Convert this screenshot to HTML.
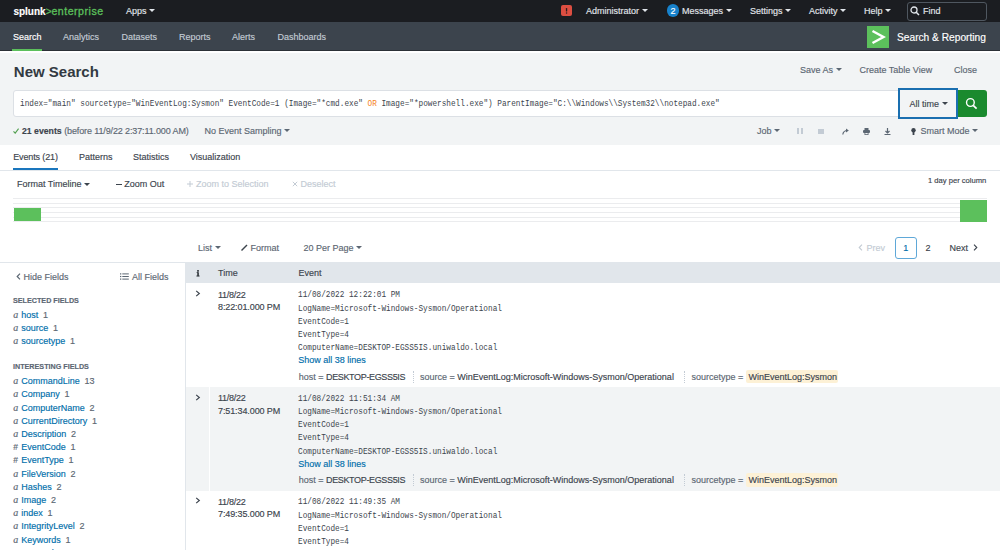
<!DOCTYPE html>
<html><head><meta charset="utf-8">
<style>
*{margin:0;padding:0;box-sizing:border-box}
html,body{width:1000px;height:550px;overflow:hidden;background:#fff}
body{font-family:"Liberation Sans",sans-serif;font-size:9px;color:#3c444d;position:relative;-webkit-text-stroke:0.15px currentColor}
.a{position:absolute}
.t{position:absolute;white-space:nowrap;line-height:10px}
.car{display:inline-block;width:0;height:0;border-left:3px solid transparent;border-right:3px solid transparent;border-top:3.5px solid currentColor;vertical-align:middle;margin-left:2.5px;position:relative;top:-0.8px}
.mono{font-family:"Liberation Mono",monospace;font-size:9px;line-height:10px;white-space:pre;transform:scaleX(0.858);transform-origin:0 0;-webkit-text-stroke:0}
.lnk{color:#006eaa}
.ty{font-family:"Liberation Serif",serif;font-style:italic;color:#5c6773;font-size:10px}
.k{color:#5c6773}
.v{color:#3c444d}
.dsep{width:0;height:12px;border-left:1px dotted #c3cbd4}
.gl{height:1px;background:#ebecee;left:13px;width:974px}
</style></head><body>

<!-- top bar -->
<div class="a" style="left:0;top:0;width:1000px;height:22px;background:#1b1d21"></div>
<!-- app bar -->
<div class="a" style="left:0;top:22px;width:1000px;height:29px;background:#3c444d;border-bottom:1px solid #2b3036"></div>
<div class="a" style="left:0;top:51px;width:1000px;height:1.5px;background:#fff"></div>
<!-- gray page header -->
<div class="a" style="left:0;top:52.5px;width:1000px;height:92.5px;background:#f2f4f5"></div>

<!-- logo -->
<div class="t" style="left:13.4px;top:5.8px;font-size:10px;font-weight:bold;color:#fff">splunk<span style="color:#5cc05c;font-weight:normal">&gt;<span style="font-size:10.6px;letter-spacing:0.5px;-webkit-text-stroke:0.3px #5cc05c">enterprise</span></span></div>
<div class="t" style="left:126px;top:6px;color:#e1e6eb">Apps<span class="car"></span></div>

<!-- right top -->
<div class="a" style="left:561px;top:5px;width:11px;height:11px;background:#dc4e41;border-radius:2px"></div>
<svg class="a" style="left:561px;top:5px" width="11" height="11" viewBox="0 0 11 11"><rect x="4.9" y="3" width="1.3" height="3.6" rx="0.5" fill="#2a1c1c"/><circle cx="5.55" cy="7.9" r="0.75" fill="#2a1c1c"/></svg>
<div class="t" style="left:586px;top:6px;color:#e1e6eb">Administrator<span class="car"></span></div>
<div class="a" style="left:666.7px;top:4px;width:12.6px;height:12.6px;background:#1782cc;border-radius:50%"></div>
<div class="t" style="left:666.7px;top:5.5px;width:12.6px;text-align:center;color:#fff;font-size:9px">2</div>
<div class="t" style="left:682px;top:6px;color:#e1e6eb">Messages<span class="car"></span></div>
<div class="t" style="left:750px;top:6px;color:#e1e6eb">Settings<span class="car"></span></div>
<div class="t" style="left:809px;top:6px;color:#e1e6eb">Activity<span class="car"></span></div>
<div class="t" style="left:864px;top:6px;color:#e1e6eb">Help<span class="car"></span></div>
<div class="a" style="left:907px;top:2px;width:80px;height:18.5px;border:1px solid #4f5760;border-radius:3px"></div>
<svg class="a" style="left:910px;top:6px" width="10" height="10" viewBox="0 0 10 10"><circle cx="4" cy="4" r="3" fill="none" stroke="#e1e6eb" stroke-width="1.3"/><path d="M6.2 6.2L9 9" stroke="#e1e6eb" stroke-width="1.5"/></svg>
<div class="t" style="left:923px;top:6px;color:#e1e6eb">Find</div>

<!-- nav -->
<div class="t" style="left:13px;top:32px;color:#fff">Search</div>
<div class="a" style="left:12.3px;top:49px;width:30px;height:2.4px;background:#5cc05c"></div>
<div class="t" style="left:63px;top:32px;color:#c3cbd4">Analytics</div>
<div class="t" style="left:121.5px;top:32px;color:#c3cbd4">Datasets</div>
<div class="t" style="left:179px;top:32px;color:#c3cbd4">Reports</div>
<div class="t" style="left:232px;top:32px;color:#c3cbd4">Alerts</div>
<div class="t" style="left:277.5px;top:32px;color:#c3cbd4">Dashboards</div>
<div class="a" style="left:867px;top:26px;width:22px;height:21.5px;background:#5cc05c"></div>
<svg class="a" style="left:867px;top:26px" width="22" height="22" viewBox="0 0 22 22"><path d="M5.5 5 L16.5 11 L5.5 17" fill="none" stroke="#fff" stroke-width="2.4"/></svg>
<div class="t" style="left:897px;top:32px;color:#fff;font-size:10.2px;margin-top:0.7px">Search &amp; Reporting</div>

<!-- title -->
<div class="t" style="left:13.8px;top:64.2px;font-size:15px;line-height:16px;font-weight:bold;color:#333a42;-webkit-text-stroke:0">New Search</div>
<div class="t" style="left:800px;top:65px;color:#5c6773">Save As<span class="car"></span></div>
<div class="t" style="left:859.5px;top:65px;color:#5c6773">Create Table View</div>
<div class="t" style="left:954px;top:65px;color:#5c6773">Close</div>

<!-- search bar -->
<div class="a" style="left:13px;top:90px;width:890px;height:26.8px;background:#fff;border:1px solid #dce0e5;border-radius:3px 0 0 3px"></div>
<div class="t mono" style="left:19.5px;top:98.5px;color:#3c444d">index="main" sourcetype="WinEventLog:Sysmon" EventCode=1 (Image="*cmd.exe" <span style="color:#f58220">OR</span> Image="*powershell.exe") ParentImage="C:\\Windows\\System32\\notepad.exe"</div>
<div class="a" style="left:898px;top:88.4px;width:60px;height:30.6px;background:#f2f4f5;border:2px solid #1a6fb0"></div>
<div class="t" style="left:909.5px;top:98.5px;color:#3c444d">All time<span class="car"></span></div>
<div class="a" style="left:958px;top:90.3px;width:29px;height:26.5px;background:#1a8a2e;border-radius:0 3px 3px 0"></div>
<svg class="a" style="left:964px;top:96px" width="15" height="15" viewBox="0 0 15 15"><circle cx="6.4" cy="6.5" r="3.85" fill="none" stroke="#fff" stroke-width="1.4"/><path d="M9.2 9.3L12.6 12.6" stroke="#fff" stroke-width="1.7"/></svg>

<!-- status row -->
<svg class="a" style="left:13px;top:128px" width="6" height="6" viewBox="0 0 6 6"><path d="M0.5 3.3L2.2 5.2L5.6 0.6" fill="none" stroke="#53a051" stroke-width="1.1"/></svg>
<div class="t" style="left:22px;top:125.8px;color:#3c444d"><b style="font-size:8.7px">21 events</b> <span style="color:#5c6773;letter-spacing:-0.12px">(before 11/9/22 2:37:11.000 AM)</span></div>
<div class="t" style="left:204.5px;top:125.8px;color:#5c6773">No Event Sampling<span class="car"></span></div>

<div class="t" style="left:757px;top:125.8px;color:#5c6773">Job<span class="car"></span></div>
<div class="a" style="left:797.3px;top:128.4px;width:1.8px;height:5.8px;background:#c3cbd4"></div>
<div class="a" style="left:800.9px;top:128.4px;width:1.8px;height:5.8px;background:#c3cbd4"></div>
<div class="a" style="left:818px;top:129px;width:6px;height:5px;background:#c3cbd4"></div>
<svg class="a" style="left:842px;top:128px" width="7" height="7" viewBox="0 0 7 7"><path d="M0.8 6.5 C1.2 3.5 3 2.5 5.5 2.5" fill="none" stroke="#5c6773" stroke-width="1.2"/><path d="M4 0.5 L6.8 2.5 L4 4.5Z" fill="#5c6773"/></svg>
<svg class="a" style="left:863px;top:128px" width="7" height="7" viewBox="0 0 7 7"><rect x="1.5" y="0" width="4" height="2" fill="#5c6773"/><rect x="0" y="2" width="7" height="3" rx="1" fill="#5c6773"/><rect x="1.5" y="4.5" width="4" height="2.5" fill="#5c6773"/><rect x="2.3" y="5" width="2.4" height="1.2" fill="#f2f4f5"/></svg>
<svg class="a" style="left:884px;top:128px" width="7" height="7" viewBox="0 0 7 7"><path d="M3.5 0V4.5" stroke="#5c6773" stroke-width="1.2"/><path d="M1.5 3L3.5 5L5.5 3" fill="none" stroke="#5c6773" stroke-width="1.2"/><path d="M0.5 6.5H6.5" stroke="#5c6773" stroke-width="1"/></svg>
<svg class="a" style="left:910.5px;top:127.5px" width="5" height="7" viewBox="0 0 5 7"><circle cx="2.5" cy="2.2" r="2.2" fill="#3c444d"/><rect x="1.6" y="3.5" width="1.8" height="3.5" fill="#3c444d"/></svg>
<div class="t" style="left:920.5px;top:125.8px;color:#5c6773">Smart Mode<span class="car"></span></div>

<!-- tabs -->
<div class="t" style="left:13.2px;top:152.3px;color:#3c444d;letter-spacing:-0.12px">Events (21)</div>
<div class="a" style="left:12.6px;top:167.6px;width:45.4px;height:2.1px;background:#1a76bd"></div>
<div class="t" style="left:79px;top:152.3px;color:#3c444d">Patterns</div>
<div class="t" style="left:133px;top:152.3px;color:#3c444d">Statistics</div>
<div class="t" style="left:190px;top:152.3px;color:#3c444d">Visualization</div>
<div class="a" style="left:0;top:169.5px;width:1000px;height:1px;background:#e1e6eb"></div>

<!-- timeline toolbar -->
<div class="t" style="left:17px;top:179.4px;color:#3c444d">Format Timeline<span class="car"></span></div>
<div class="a" style="left:115.7px;top:184px;width:6px;height:1.2px;background:#3c444d"></div>
<div class="t" style="left:124.3px;top:179.4px;color:#3c444d">Zoom Out</div>
<svg class="a" style="left:187px;top:181px" width="6" height="6" viewBox="0 0 6 6"><path d="M3 0V6M0 3H6" stroke="#c3cbd4" stroke-width="1"/></svg>
<div class="t" style="left:196px;top:179.4px;color:#c3cbd4">Zoom to Selection</div>
<svg class="a" style="left:292px;top:181.3px" width="6" height="6" viewBox="0 0 6 6"><path d="M0.8 0.8L5.2 5.2M5.2 0.8L0.8 5.2" stroke="#c3cbd4" stroke-width="1"/></svg>
<div class="t" style="left:300.4px;top:179.4px;color:#c3cbd4">Deselect</div>
<div class="t" style="left:928px;top:176px;font-size:7.6px;color:#3c444d">1 day per column</div>

<!-- timeline -->
<div class="a gl" style="top:198px"></div>
<div class="a gl" style="top:202.7px"></div>
<div class="a gl" style="top:207.3px"></div>
<div class="a gl" style="top:212px"></div>
<div class="a gl" style="top:216.6px"></div>
<div class="a gl" style="top:221.3px"></div>
<div class="a" style="left:14px;top:208px;width:27px;height:13px;background:#5cc05c"></div>
<div class="a" style="left:959.5px;top:199.5px;width:27px;height:22px;background:#5cc05c"></div>

<!-- list toolbar -->
<div class="t" style="left:198px;top:243px;color:#5c6773">List<span class="car"></span></div>
<svg class="a" style="left:241px;top:244px" width="7" height="7" viewBox="0 0 7 7"><path d="M0.5 6.5L6 1" stroke="#3c444d" stroke-width="1.4"/></svg>
<div class="t" style="left:250.5px;top:243px;color:#5c6773">Format</div>
<div class="t" style="left:303.5px;top:243px;color:#5c6773">20 Per Page<span class="car"></span></div>

<svg class="a" style="left:857.5px;top:244.3px" width="5" height="7" viewBox="0 0 5 7"><path d="M4 0.6L1.2 3.5L4 6.4" fill="none" stroke="#c3cbd4" stroke-width="1.1"/></svg>
<div class="t" style="left:866.4px;top:243px;color:#c3cbd4">Prev</div>
<div class="a" style="left:895px;top:237px;width:21.5px;height:21.5px;border:1px solid #5fa8d8;border-radius:3px"></div>
<div class="t" style="left:895px;top:243px;width:21.5px;text-align:center;color:#006eaa">1</div>
<div class="t" style="left:925.5px;top:243px;color:#3c444d">2</div>
<div class="t" style="left:949.5px;top:243px;color:#3c444d">Next</div>
<svg class="a" style="left:972.5px;top:244.3px" width="5" height="7" viewBox="0 0 5 7"><path d="M1 0.6L3.8 3.5L1 6.4" fill="none" stroke="#3c444d" stroke-width="1.1"/></svg>

<!-- table borders -->
<div class="a" style="left:0;top:262px;width:1000px;height:1px;background:#e1e6eb"></div>
<div class="a" style="left:185px;top:262px;width:1px;height:288px;background:#e1e6eb"></div>

<!-- sidebar -->
<svg class="a" style="left:16px;top:273px" width="5" height="7" viewBox="0 0 5 7"><path d="M4 0.6L1.2 3.5L4 6.4" fill="none" stroke="#5c6773" stroke-width="1.2"/></svg>
<div class="t" style="left:23.6px;top:272px;color:#5c6773">Hide Fields</div>
<svg class="a" style="left:119.7px;top:273px" width="9" height="7" viewBox="0 0 9 7"><g fill="#5c6773"><rect x="0" y="0.3" width="1.3" height="1.2"/><rect x="0" y="2.9" width="1.3" height="1.2"/><rect x="0" y="5.5" width="1.3" height="1.2"/><rect x="2.3" y="0.4" width="6.5" height="1"/><rect x="2.3" y="3" width="6.5" height="1"/><rect x="2.3" y="5.6" width="6.5" height="1"/></g></svg>
<div class="t" style="left:132px;top:272px;color:#5c6773">All Fields</div>
<div class="t" style="left:13px;top:296px;color:#5c6773;font-weight:bold;font-size:7.2px">SELECTED FIELDS</div>

<!-- table header -->
<div class="a" style="left:186px;top:263.4px;width:814px;height:20.1px;background:#e1e6eb"></div>
<svg class="a" style="left:195.5px;top:269.5px" width="4" height="7" viewBox="0 0 4 7"><g fill="#2b3036"><circle cx="2" cy="0.9" r="0.95"/><rect x="1.25" y="2.3" width="1.6" height="4"/><rect x="0.6" y="2.3" width="1.5" height="0.7"/><rect x="0.3" y="5.6" width="3.4" height="0.8"/></g></svg>
<div class="t" style="left:218px;top:267.5px;color:#3c444d">Time</div>
<div class="t" style="left:298.5px;top:267.5px;color:#3c444d">Event</div>

<!-- rows -->
<div class="a" style="left:186px;top:387px;width:814px;height:103.5px;background:#f2f4f5"></div>
<div class="a" style="left:209px;top:387px;width:1px;height:103.5px;background:#fff"></div>

<!-- GEN START -->
<div class="t ty" style="left:13.3px;top:309.9px">a</div><div class="t lnk" style="left:21.3px;top:309.9px">host</div><div class="t" style="left:42.9px;top:309.9px;color:#5c6773">1</div>
<div class="t ty" style="left:13.3px;top:323.0px">a</div><div class="t lnk" style="left:21.3px;top:323.0px">source</div><div class="t" style="left:52.9px;top:323.0px;color:#5c6773">1</div>
<div class="t ty" style="left:13.3px;top:336.2px">a</div><div class="t lnk" style="left:21.3px;top:336.2px">sourcetype</div><div class="t" style="left:69.9px;top:336.2px;color:#5c6773">1</div>
<div class="t" style="left:13px;top:362.1px;color:#5c6773;font-weight:bold;font-size:7.2px">INTERESTING FIELDS</div>
<div class="t ty" style="left:13.3px;top:376.1px">a</div><div class="t lnk" style="left:21.3px;top:376.1px">CommandLine</div><div class="t" style="left:84.4px;top:376.1px;color:#5c6773">13</div>
<div class="t ty" style="left:13.3px;top:389.3px">a</div><div class="t lnk" style="left:21.3px;top:389.3px">Company</div><div class="t" style="left:64.4px;top:389.3px;color:#5c6773">1</div>
<div class="t ty" style="left:13.3px;top:402.5px">a</div><div class="t lnk" style="left:21.3px;top:402.5px">ComputerName</div><div class="t" style="left:89.4px;top:402.5px;color:#5c6773">2</div>
<div class="t ty" style="left:13.3px;top:415.7px">a</div><div class="t lnk" style="left:21.3px;top:415.7px">CurrentDirectory</div><div class="t" style="left:91.9px;top:415.7px;color:#5c6773">1</div>
<div class="t ty" style="left:13.3px;top:428.9px">a</div><div class="t lnk" style="left:21.3px;top:428.9px">Description</div><div class="t" style="left:70.9px;top:428.9px;color:#5c6773">2</div>
<div class="t" style="left:13.2px;top:442.1px;color:#5c6773;font-size:8.5px">#</div><div class="t lnk" style="left:21.3px;top:442.1px">EventCode</div><div class="t" style="left:70.4px;top:442.1px;color:#5c6773">1</div>
<div class="t" style="left:13.2px;top:455.3px;color:#5c6773;font-size:8.5px">#</div><div class="t lnk" style="left:21.3px;top:455.3px">EventType</div><div class="t" style="left:68.4px;top:455.3px;color:#5c6773">1</div>
<div class="t ty" style="left:13.3px;top:468.5px">a</div><div class="t lnk" style="left:21.3px;top:468.5px">FileVersion</div><div class="t" style="left:70.4px;top:468.5px;color:#5c6773">2</div>
<div class="t ty" style="left:13.3px;top:481.7px">a</div><div class="t lnk" style="left:21.3px;top:481.7px">Hashes</div><div class="t" style="left:56.4px;top:481.7px;color:#5c6773">2</div>
<div class="t ty" style="left:13.3px;top:494.9px">a</div><div class="t lnk" style="left:21.3px;top:494.9px">Image</div><div class="t" style="left:50.9px;top:494.9px;color:#5c6773">2</div>
<div class="t ty" style="left:13.3px;top:508.1px">a</div><div class="t lnk" style="left:21.3px;top:508.1px">index</div><div class="t" style="left:47.4px;top:508.1px;color:#5c6773">1</div>
<div class="t ty" style="left:13.3px;top:521.3px">a</div><div class="t lnk" style="left:21.3px;top:521.3px">IntegrityLevel</div><div class="t" style="left:79.4px;top:521.3px;color:#5c6773">2</div>
<div class="t ty" style="left:13.3px;top:534.5px">a</div><div class="t lnk" style="left:21.3px;top:534.5px">Keywords</div><div class="t" style="left:65.4px;top:534.5px;color:#5c6773">1</div>
<div class="t" style="left:13.2px;top:547.7px;color:#5c6773;font-size:8.5px">#</div><div class="t lnk" style="left:21.3px;top:547.7px">LogonId</div><div class="t" style="left:58.4px;top:547.7px;color:#5c6773">1</div>
<svg class="a" style="left:194.6px;top:290.3px" width="6" height="7" viewBox="0 0 6 7"><path d="M1.2 0.9L4.3 3.5L1.2 6.1" fill="none" stroke="#3c444d" stroke-width="1.2"/></svg>
<div class="t" style="left:218px;top:289.5px;letter-spacing:-0.25px">11/8/22</div>
<div class="t" style="left:218px;top:302.1px;letter-spacing:-0.1px">8:22:01.000 PM</div>
<div class="t mono" style="left:298.3px;top:290.3px">11/08/2022 12:22:01 PM</div>
<div class="t mono" style="left:298.3px;top:303.5px">LogName=Microsoft-Windows-Sysmon/Operational</div>
<div class="t mono" style="left:298.3px;top:316.7px">EventCode=1</div>
<div class="t mono" style="left:298.3px;top:329.9px">EventType=4</div>
<div class="t mono" style="left:298.3px;top:343.1px">ComputerName=DESKTOP-EGSS5IS.uniwaldo.local</div>
<div class="t lnk" style="left:298.3px;top:355.4px">Show all 38 lines</div>
<div class="t" style="left:298.7px;top:371.8px"><span class="k">host =</span> <span class="v" style="letter-spacing:-0.35px">DESKTOP-EGSS5IS</span></div>
<div class="a dsep" style="left:413px;top:370.9px"></div>
<div class="t" style="left:420px;top:371.8px"><span class="k">source =</span> <span class="v">WinEventLog:Microsoft-Windows-Sysmon/Operational</span></div>
<div class="a dsep" style="left:684.4px;top:370.9px"></div>
<div class="a" style="left:746.4px;top:369.9px;width:91.2px;height:13.6px;background:#fdf1d6;border-radius:2px"></div>
<div class="t" style="left:691.6px;top:371.8px"><span class="k">sourcetype =</span> </div>
<div class="t v" style="left:748.4px;top:371.8px">WinEventLog:Sysmon</div>
<svg class="a" style="left:194.6px;top:393.8px" width="6" height="7" viewBox="0 0 6 7"><path d="M1.2 0.9L4.3 3.5L1.2 6.1" fill="none" stroke="#3c444d" stroke-width="1.2"/></svg>
<div class="t" style="left:218px;top:393.0px;letter-spacing:-0.25px">11/8/22</div>
<div class="t" style="left:218px;top:405.6px;letter-spacing:-0.1px">7:51:34.000 PM</div>
<div class="t mono" style="left:298.3px;top:393.8px">11/08/2022 11:51:34 AM</div>
<div class="t mono" style="left:298.3px;top:407.0px">LogName=Microsoft-Windows-Sysmon/Operational</div>
<div class="t mono" style="left:298.3px;top:420.2px">EventCode=1</div>
<div class="t mono" style="left:298.3px;top:433.4px">EventType=4</div>
<div class="t mono" style="left:298.3px;top:446.6px">ComputerName=DESKTOP-EGSS5IS.uniwaldo.local</div>
<div class="t lnk" style="left:298.3px;top:458.9px">Show all 38 lines</div>
<div class="t" style="left:298.7px;top:475.3px"><span class="k">host =</span> <span class="v" style="letter-spacing:-0.35px">DESKTOP-EGSS5IS</span></div>
<div class="a dsep" style="left:413px;top:474.4px"></div>
<div class="t" style="left:420px;top:475.3px"><span class="k">source =</span> <span class="v">WinEventLog:Microsoft-Windows-Sysmon/Operational</span></div>
<div class="a dsep" style="left:684.4px;top:474.4px"></div>
<div class="a" style="left:746.4px;top:473.4px;width:91.2px;height:13.6px;background:#fdf1d6;border-radius:2px"></div>
<div class="t" style="left:691.6px;top:475.3px"><span class="k">sourcetype =</span> </div>
<div class="t v" style="left:748.4px;top:475.3px">WinEventLog:Sysmon</div>
<svg class="a" style="left:194.6px;top:497.3px" width="6" height="7" viewBox="0 0 6 7"><path d="M1.2 0.9L4.3 3.5L1.2 6.1" fill="none" stroke="#3c444d" stroke-width="1.2"/></svg>
<div class="t" style="left:218px;top:496.5px;letter-spacing:-0.25px">11/8/22</div>
<div class="t" style="left:218px;top:509.1px;letter-spacing:-0.1px">7:49:35.000 PM</div>
<div class="t mono" style="left:298.3px;top:497.3px">11/08/2022 11:49:35 AM</div>
<div class="t mono" style="left:298.3px;top:510.5px">LogName=Microsoft-Windows-Sysmon/Operational</div>
<div class="t mono" style="left:298.3px;top:523.7px">EventCode=1</div>
<div class="t mono" style="left:298.3px;top:536.9px">EventType=4</div>
<!-- GEN END -->
</body></html>
